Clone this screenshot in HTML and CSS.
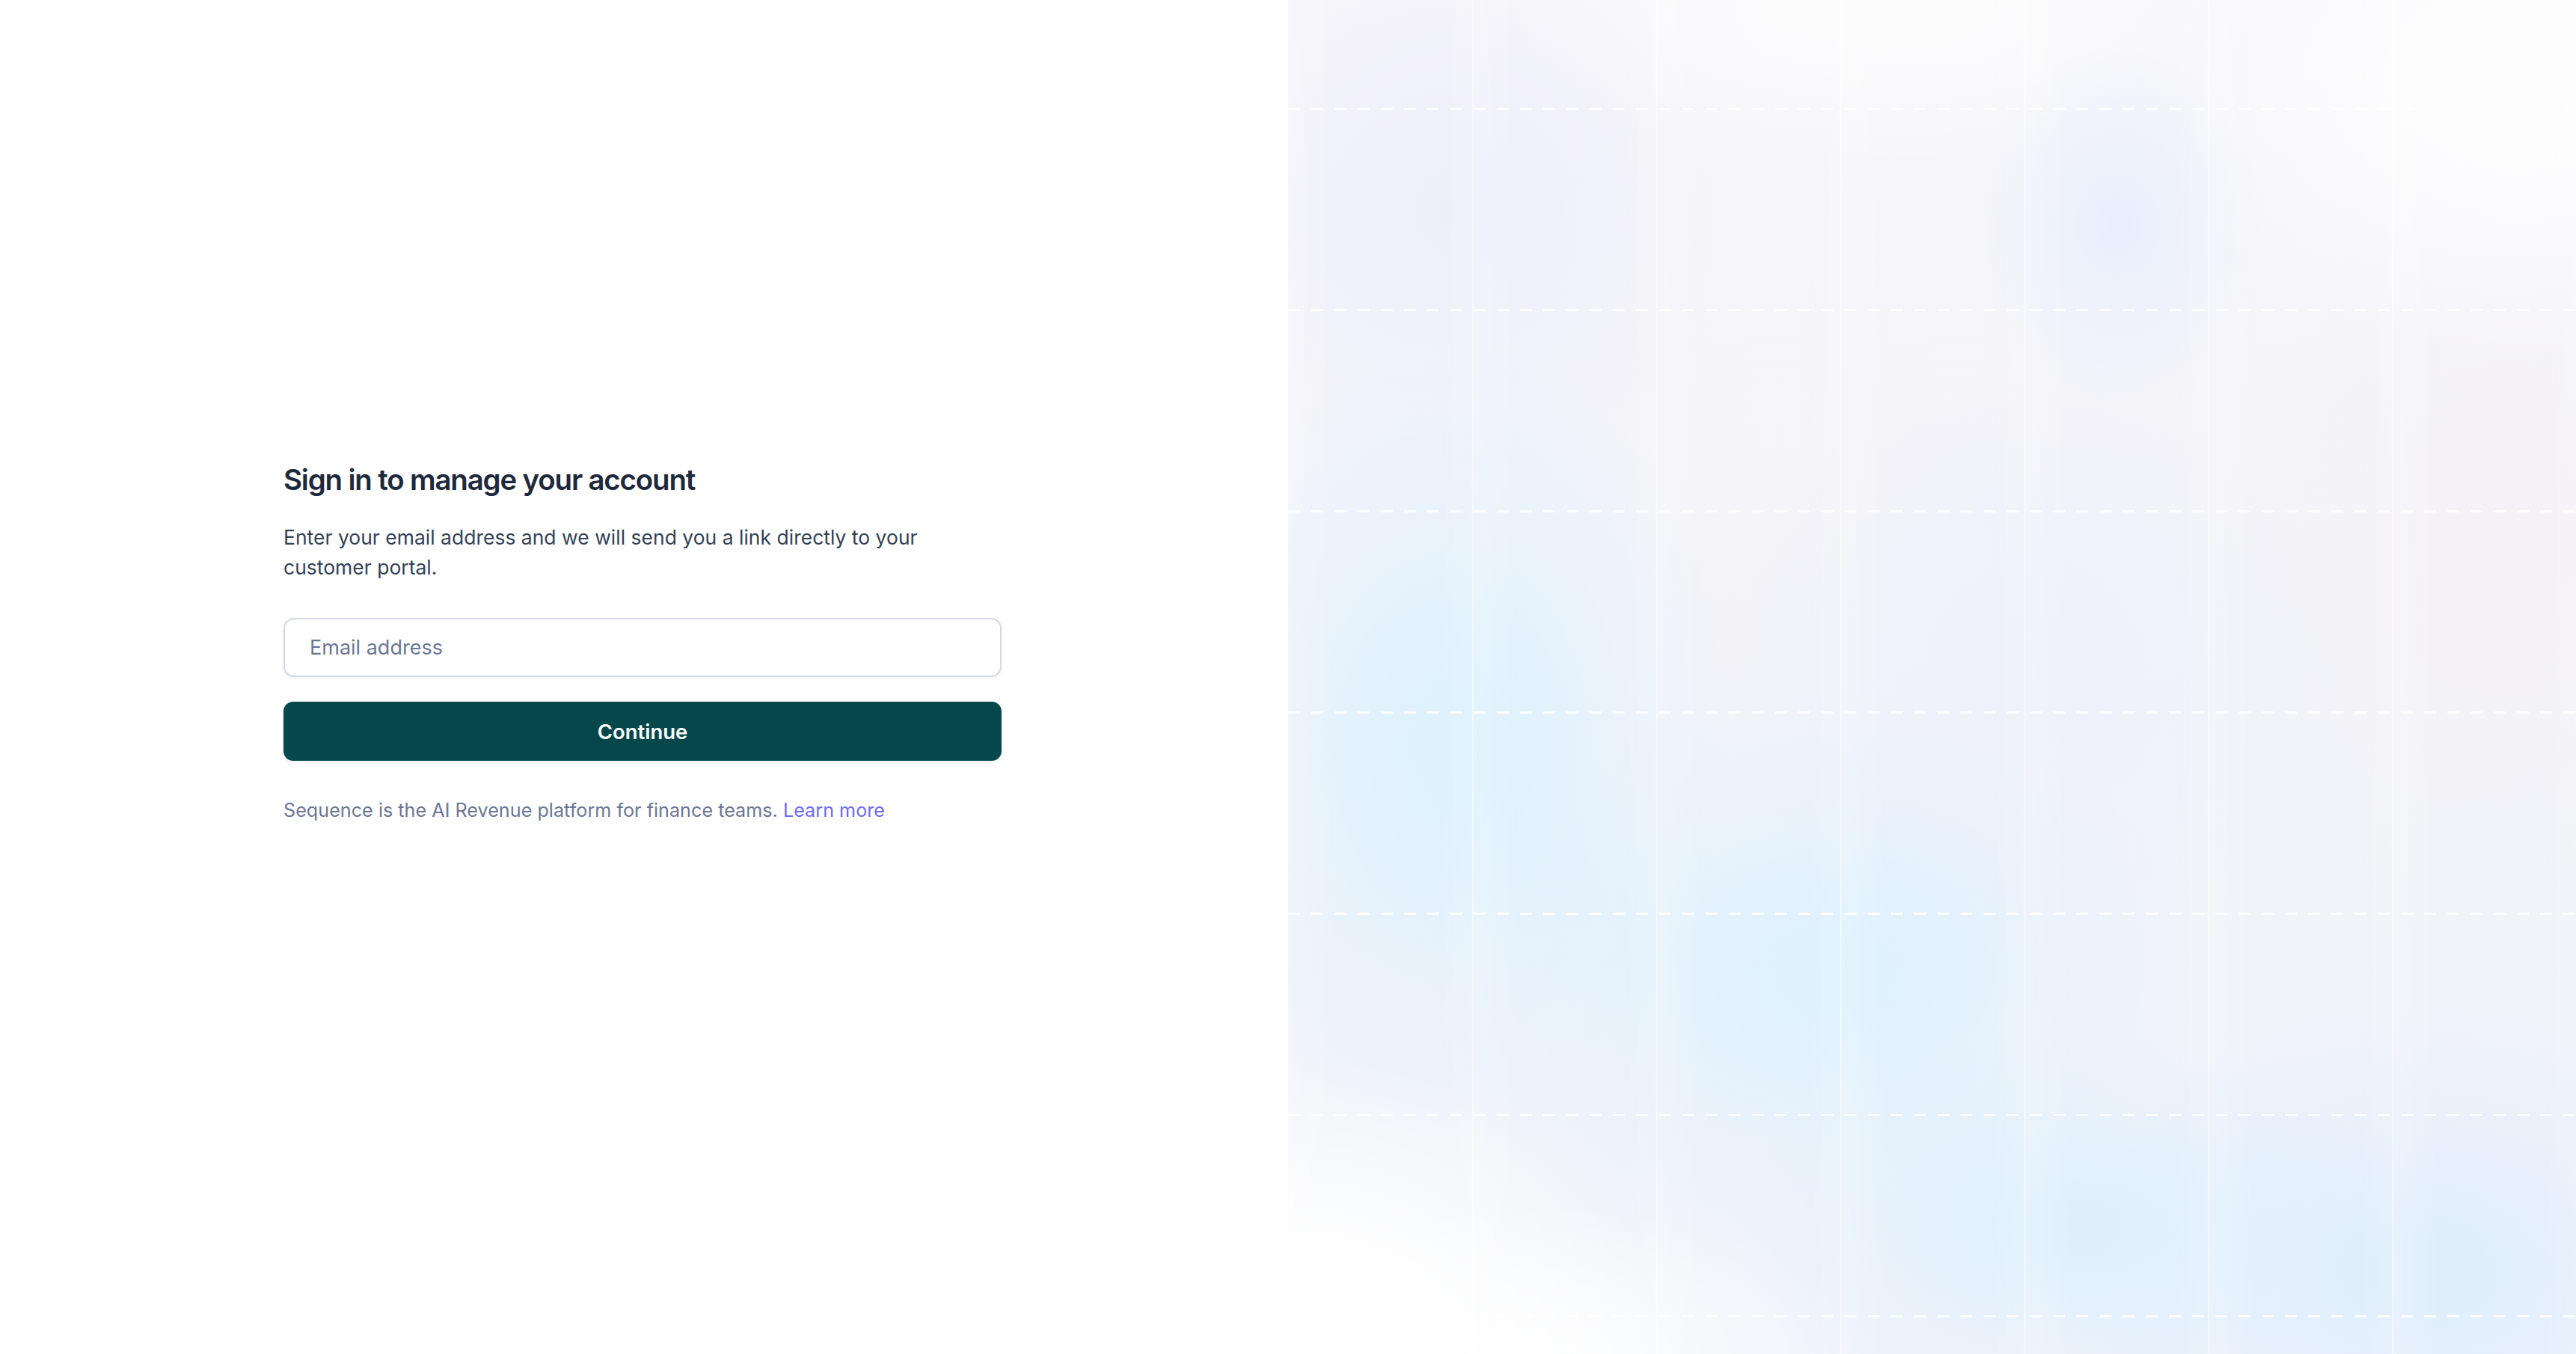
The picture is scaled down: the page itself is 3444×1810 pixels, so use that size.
FILE: index.html
```html
<!DOCTYPE html>
<html lang="en">
<head>
<meta charset="utf-8">
<title>Sign in</title>
<link rel="stylesheet" href="styles.css">
</head>
<body>
<main class="page">
  <section class="left">
    <form class="signin">
      <h1 class="title">Sign in to manage your account</h1>
      <p class="lead">Enter your email address and we will send you a link directly to your customer portal.</p>
      <input class="email" type="email" placeholder="Email address">
      <button class="continue" type="button">Continue</button>
      <p class="note">Sequence is the AI Revenue platform for finance teams. <a class="learn" href="#">Learn more</a></p>
    </form>
  </section>
  <aside class="right">
    <div class="cols">
      <span></span><span></span><span></span><span></span><span></span><span></span><span></span>
    </div>
    <div class="lines">
      <i></i><i></i><i></i><i></i><i></i><i></i><i></i>
    </div>
  </aside>
</main>
</body>
</html>
```

FILE: styles.css
```css
* { box-sizing: border-box; }
html, body { margin: 0; padding: 0; }
body {
  font-family: Inter, "Noto Sans", "Liberation Sans", sans-serif;
  background: #ffffff;
  color: #1e293b;
}
.page {
  display: grid;
  grid-template-columns: 1722px 1fr;
  width: 3444px;
  height: 1810px;
  overflow: hidden;
}
.left {
  display: flex;
  align-items: center;
  justify-content: center;
  padding-bottom: 91px;
  padding-right: 4px;
}
.signin {
  width: 960px;
  display: flex;
  flex-direction: column;
}
.title {
  margin: 0;
  font-size: 38.5px;
  line-height: 50px;
  font-weight: 600;
  letter-spacing: -1.2px;
  color: #1e293b;
}
.lead {
  margin: 32px 0 0;
  font-size: 26.5px;
  line-height: 40px;
  color: #334155;
  max-width: 900px;
}
.email {
  margin-top: 48px;
  height: 79px;
  width: 100%;
  border: 2px solid #d5d9e6;
  border-radius: 14px;
  padding: 0 33px;
  font-family: inherit;
  font-size: 27px;
  color: #1e293b;
  background: #fff;
  box-shadow: 0 2px 4px rgba(15, 23, 42, 0.06);
  outline: none;
}
.email::placeholder { color: #6b7793; }
.continue {
  margin-top: 33px;
  height: 79px;
  width: 100%;
  border: 0;
  border-radius: 13px;
  background: #05474b;
  color: #ffffff;
  font-family: inherit;
  font-size: 27.5px;
  font-weight: 600;
  box-shadow: 0 2px 4px rgba(15, 23, 42, 0.08);
}
.note {
  margin: 46px 0 0;
  font-size: 25.2px;
  line-height: 40px;
  color: #6b7794;
}
.learn { color: #6d6af4; text-decoration: none; }

.right {
  position: relative;
  background:
    radial-gradient(ellipse 520px 400px at 0px 1810px, #ffffff 35%, rgba(255,255,255,0) 100%),
    radial-gradient(ellipse 420px 200px at 350px 1810px, rgba(255,255,255,0.8) 10%, rgba(255,255,255,0) 100%),
    radial-gradient(ellipse 480px 700px at 220px 1000px, rgba(222,241,253,1) 10%, rgba(222,241,253,0) 78%),
    radial-gradient(ellipse 640px 480px at 720px 1300px, rgba(222,241,253,1) 10%, rgba(222,241,253,0) 78%),
    radial-gradient(ellipse 600px 340px at 1050px 1640px, rgba(223,240,252,1) 10%, rgba(223,240,252,0) 78%),
    radial-gradient(ellipse 640px 460px at 1520px 1700px, rgba(224,238,252,1) 10%, rgba(224,238,252,0) 78%),
    radial-gradient(ellipse 260px 320px at 1110px 300px, rgba(230,238,252,0.95), rgba(230,238,252,0) 75%),
    radial-gradient(ellipse 520px 380px at 1650px 100px, #fdfdfe 25%, rgba(253,253,254,0) 100%),
    radial-gradient(ellipse 520px 220px at 800px 0px, rgba(252,252,253,1) 20%, rgba(252,252,253,0) 100%),
    radial-gradient(ellipse 480px 480px at 220px 280px, rgba(238,238,250,1), rgba(238,238,250,0) 80%),
    radial-gradient(ellipse 420px 520px at 1620px 700px, rgba(245,242,247,1), rgba(245,242,247,0) 80%),
    radial-gradient(ellipse 520px 520px at 1000px 900px, rgba(238,240,250,0.95), rgba(238,240,250,0) 80%),
    linear-gradient(180deg, #f7f6fa 0%, #f4f4f9 40%, #f2f3f9 70%, #f0f3fa 100%);
}
.cols {
  position: absolute;
  inset: 0;
  display: grid;
  grid-template-columns: repeat(7, 1fr);
}
.cols span {
  border-left: 2px solid rgba(255, 255, 255, 0.5);
  background: linear-gradient(90deg, rgba(255,255,255,0.18), rgba(255,255,255,0) 25%, rgba(255,255,255,0) 80%, rgba(255,255,255,0.08));
}
.cols span:first-child { border-left-color: rgba(255,255,255,0.2); }
.lines {
  position: absolute;
  inset: 0;
  display: flex;
  flex-direction: column;
  gap: 266px;
  padding-top: 144px;
}
.lines i {
  display: block;
  height: 3px;
  background: repeating-linear-gradient(90deg, rgba(255,255,255,0.9) 0 16px, rgba(255,255,255,0) 16px 31px);
}
```
